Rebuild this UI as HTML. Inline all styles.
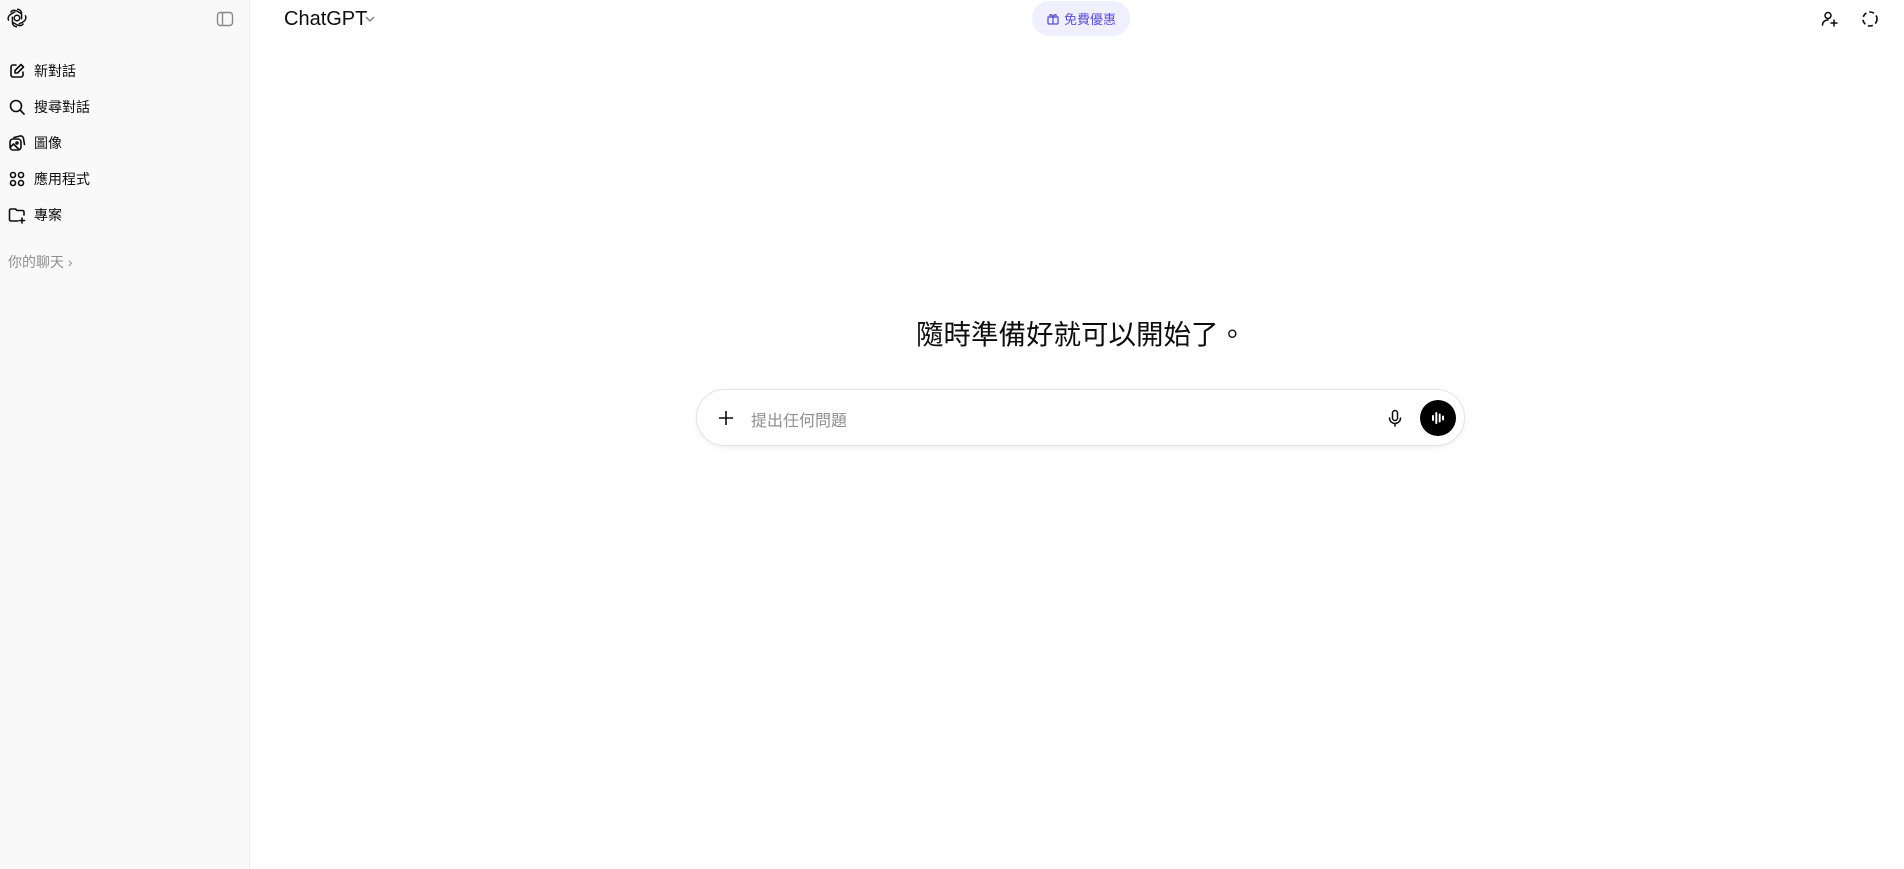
<!DOCTYPE html>
<html><head><meta charset="utf-8"><style>
*{margin:0;padding:0;box-sizing:border-box}
body{width:1904px;height:869px;overflow:hidden;font-family:"Liberation Sans","Noto Sans CJK TC",sans-serif;background:#fff;position:relative;color:#0d0d0d}
.sb{position:absolute;left:0;top:0;width:250px;height:869px;background:#f9f9f9;border-right:1px solid #ececec}
.it{position:absolute;left:8px;height:30px;display:flex;align-items:center;font-size:14px}
.it svg{width:18px;height:18px;margin-right:8px;fill:none;stroke:#0d0d0d;stroke-width:1.6;stroke-linecap:round;stroke-linejoin:round}
.ab{position:absolute}
</style></head><body>
<div class="sb">
<svg class="ab" style="left:6px;top:7px" width="22" height="22" viewBox="0 0 24 24" fill="none" stroke="#0d0d0d" stroke-width="1.6"><circle cx="12" cy="12" r="3"/><path d="M12 2.5c3 0 5 2 5 5v6M21 9c1.5 2.6.5 5.4-2 6.9l-5.2 3M19 18c-1.5 2.6-4.3 3-6.9 1.5l-5.2-3M12 21.5c-3 0-5-2-5-5v-6M3 15c-1.5-2.6-.5-5.4 2-6.9l5.2-3M5 6c1.5-2.6 4.3-3 6.9-1.5l5.2 3"/></svg>
<svg class="ab" style="left:216px;top:10px" width="18" height="18" viewBox="0 0 18 18" fill="none" stroke="#888" stroke-width="1.4"><rect x="1.5" y="2.5" width="15" height="13" rx="3"/><path d="M6.5 2.5v13"/></svg>
<div class="it" style="top:56px"><svg viewBox="0 0 18 18"><path d="M8 3H5a2 2 0 0 0-2 2v8a2 2 0 0 0 2 2h8a2 2 0 0 0 2-2v-3"/><path d="M13 2.5l2.5 2.5-6 6H7V8.5z"/></svg>新對話</div>
<div class="it" style="top:92px"><svg viewBox="0 0 18 18"><circle cx="8" cy="8" r="5.5"/><path d="M12 12l4 4"/></svg>搜尋對話</div>
<div class="it" style="top:128px"><svg viewBox="0 0 18 18"><rect x="2" y="5" width="11" height="11" rx="3"/><path d="M6 3.5l6-1.5a3 3 0 0 1 3.5 2.5l1 6M2.5 13l3-3 5 5"/><circle cx="9" cy="9" r="1"/></svg>圖像</div>
<div class="it" style="top:164px"><svg viewBox="0 0 18 18"><circle cx="5" cy="5" r="2.5"/><circle cx="13" cy="5" r="2.5"/><circle cx="5" cy="13" r="2.5"/><circle cx="13" cy="13" r="2.5"/></svg>應用程式</div>
<div class="it" style="top:200px"><svg viewBox="0 0 18 18"><path d="M16 9V6a1.5 1.5 0 0 0-1.5-1.5H9L7.5 3H3a1.5 1.5 0 0 0-1.5 1.5v9A1.5 1.5 0 0 0 3 15h7M14 12v5M11.5 14.5h5"/></svg>專案</div>
<div class="ab" style="left:8px;top:252px;font-size:14px;color:#8f8f8f">你的聊天 ›</div>
</div>
<div class="ab" style="left:284px;top:6px;font-size:20px;line-height:26px">ChatGPT</div>
<svg class="ab" style="left:364px;top:13px" width="12" height="12" viewBox="0 0 12 12" fill="none" stroke="#777" stroke-width="1.3"><path d="M2 4l4 4 4-4"/></svg>
<div class="ab" style="left:1032px;top:1px;width:98px;height:35px;border-radius:18px;background:#f0effd;color:#5b4fd6;font-size:13px;display:flex;align-items:center;justify-content:center"><svg width="14" height="14" viewBox="0 0 14 14" fill="none" stroke="#5b4fd6" stroke-width="1.3" style="margin-right:4px"><rect x="2" y="5" width="10" height="7" rx="1"/><path d="M1.5 5h11M7 5v7M7 5c-1-3-4-3-3-1M7 5c1-3 4-3 3-1"/></svg>免費優惠</div>
<svg class="ab" style="left:1820px;top:9px" width="20" height="20" viewBox="0 0 20 20" fill="none" stroke="#0d0d0d" stroke-width="1.5" stroke-linecap="round"><circle cx="8" cy="6.5" r="3"/><path d="M2.5 16c0-3 2.5-5 5.5-5M14 11v6M11 14h6"/></svg>
<svg class="ab" style="left:1860px;top:9px" width="20" height="20" viewBox="0 0 20 20" fill="none" stroke="#0d0d0d" stroke-width="1.6" stroke-dasharray="5 3"><circle cx="10" cy="10" r="7"/></svg>
<div class="ab" style="left:254px;width:1654px;top:313px;text-align:center;font-size:27.5px;line-height:44px">隨時準備好就可以開始了。</div>
<div class="ab" style="left:696px;top:389px;width:769px;height:57px;border-radius:29px;border:1px solid #e3e3e3;box-shadow:0 2px 6px rgba(0,0,0,.06);background:#fff">
<svg class="ab" style="left:19px;top:18px" width="20" height="20" viewBox="0 0 20 20" stroke="#0d0d0d" stroke-width="1.6"><path d="M10 3v14M3 10h14"/></svg>
<div class="ab" style="left:54px;top:17px;font-size:16px;color:#8f8f8f">提出任何問題</div>
<svg class="ab" style="left:688px;top:18px" width="20" height="20" viewBox="0 0 20 20" fill="none" stroke="#0d0d0d" stroke-width="1.5" stroke-linecap="round"><rect x="7.5" y="2.5" width="5" height="10" rx="2.5"/><path d="M4.5 10a5.5 5.5 0 0 0 11 0M10 15.5v2.5"/></svg>
<div class="ab" style="left:723px;top:10px;width:36px;height:36px;border-radius:50%;background:#000"><svg width="36" height="36" viewBox="0 0 36 36" stroke="#fff" stroke-width="2" stroke-linecap="round"><path d="M13 16v4M16.3 13v10M19.7 14.5v7M23 16.5v3"/></svg></div>
</div>
</body></html>
